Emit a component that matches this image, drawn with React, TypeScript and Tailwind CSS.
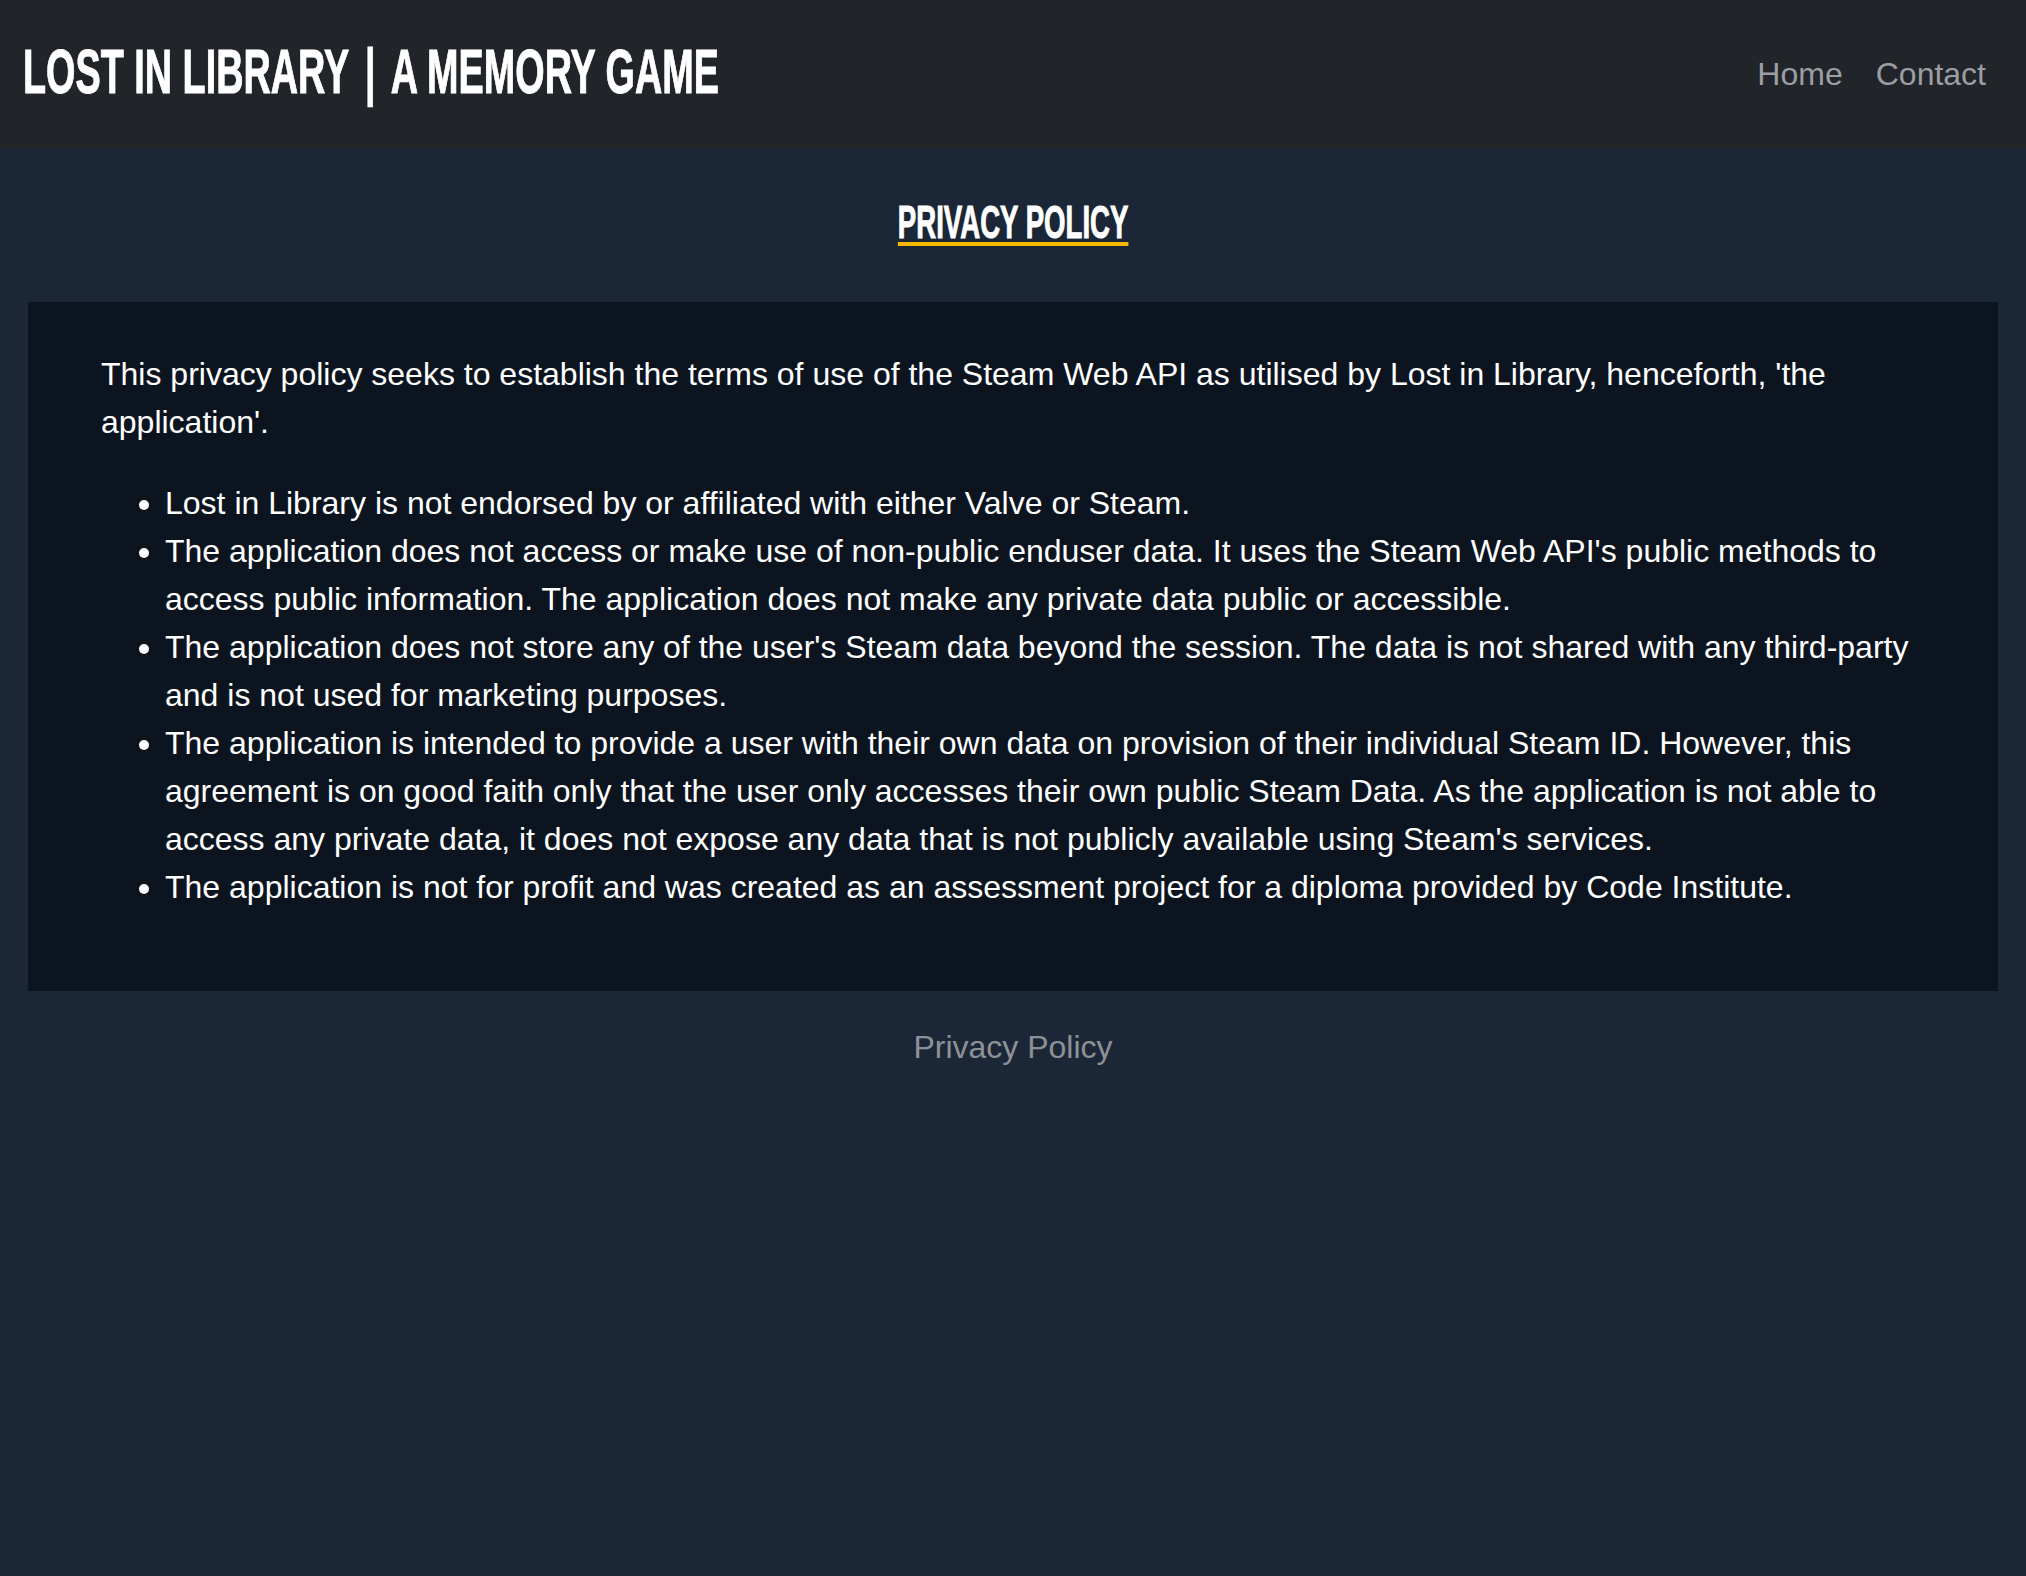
const points = [
  "Lost in Library is not endorsed by or affiliated with either Valve or Steam.",
  "The application does not access or make use of non-public enduser data. It uses the Steam Web API's public methods to access public information. The application does not make any private data public or accessible.",
  "The application does not store any of the user's Steam data beyond the session. The data is not shared with any third-party and is not used for marketing purposes.",
  "The application is intended to provide a user with their own data on provision of their individual Steam ID. However, this agreement is on good faith only that the user only accesses their own public Steam Data. As the application is not able to access any private data, it does not expose any data that is not publicly available using Steam's services.",
  "The application is not for profit and was created as an assessment project for a diploma provided by Code Institute.",
];

// condensed display face stand-in: bold sans squeezed horizontally
const display = "font-['Liberation_Sans_Narrow','Liberation_Sans',sans-serif] font-bold uppercase [-webkit-text-stroke:1px_white]";

export default function App() {
  return (
    <div className="min-h-screen bg-[#1b2737] font-['Liberation_Sans',Arial,sans-serif]">
      <header className="flex h-[148px] items-center justify-between bg-[#212429] pl-[23px] pr-[40px]">
        <h1 className={`${display} origin-left scale-x-[0.6] whitespace-nowrap pb-[6px] text-[63px] leading-none text-white`}>
          Lost in Library <span className="px-[10px]">|</span> A Memory Game
        </h1>
        <nav className="flex gap-[33px] text-[32px] leading-none text-[#9b9ea2]">
          <a href="#">Home</a>
          <a href="#">Contact</a>
        </nav>
      </header>

      <main>
        <div className="mt-[51px] mb-[57px] text-center">
          <h2
            className={`${display} inline-block scale-x-[0.6] text-[46px] leading-none text-white underline decoration-[#f6b800] decoration-[4px] underline-offset-[4px]`}
          >
            Privacy Policy
          </h2>
        </div>

        <section className="mx-[28px] bg-[#0c151f] px-[73px] pt-[48px] pb-[48px] text-[32px] leading-[48px] text-white">
          <p className="mb-[33px]">
            This privacy policy seeks to establish the terms of use of the Steam Web API as utilised by Lost in Library, henceforth,
            'the application'.
          </p>
          <ul className="mb-[32px] list-disc pl-[64px]">
            {points.map((text) => (
              <li key={text}>{text}</li>
            ))}
          </ul>
        </section>

        <footer className="mt-[40px] text-center text-[32px] leading-none text-[#8d9196]">
          <a href="#">Privacy Policy</a>
        </footer>
      </main>
    </div>
  );
}
